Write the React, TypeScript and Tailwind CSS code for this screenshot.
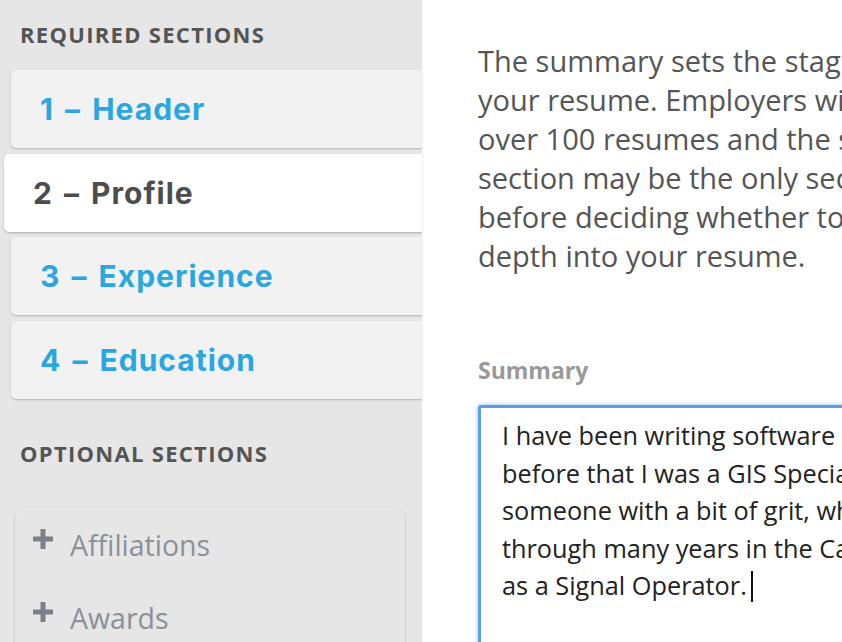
import React from "react";

const open = { fontFamily: '"Open Sans", "DejaVu Sans", sans-serif' };
const geo = { fontFamily: 'Inter, Lato, "Open Sans", sans-serif' };

function Card({ label, active, mt }: { label: string; active?: boolean; mt: string }) {
  return (
    <div
      className={
        "h-[78px] flex items-center rounded-l-[5px] " +
        mt +
        (active
          ? " ml-[4px] pl-[29px] bg-white shadow-[0_1px_2px_rgba(0,0,0,0.25)]"
          : " ml-[11px] pl-[29px] bg-[#f2f2f2] shadow-[0_1px_2px_rgba(0,0,0,0.22)]")
      }
    >
      <span
        className={
          "text-[30px] font-bold leading-none tracking-[1px] [word-spacing:3px] " +
          (active ? "text-[#4d4d4d]" : "text-[#2aa7e0]")
        }
        style={geo}
      >
        {label}
      </span>
    </div>
  );
}

function Plus() {
  return (
    <svg width="20" height="20" viewBox="0 0 20 20" className="shrink-0">
      <rect x="7.5" y="0" width="5" height="20" fill="#7c8088" />
      <rect x="0" y="7.5" width="20" height="5" fill="#7c8088" />
    </svg>
  );
}

export default function App() {
  const para = [
    "The summary sets the stage for",
    "your resume. Employers will read",
    "over 100 resumes and the summary",
    "section may be the only section read",
    "before deciding whether to go in",
    "depth into your resume.",
  ];
  const summary = [
    "I have been writing software since",
    "before that I was a GIS Specialist",
    "someone with a bit of grit, who",
    "through many years in the Canadian",
    "as a Signal Operator.",
  ];
  return (
    <div className="w-[842px] h-[642px] overflow-hidden flex bg-white" style={open}>
      <div className="w-[422px] shrink-0 bg-[#e6e6e6] h-full">
        <div className="pt-[19px] pl-[20px] text-[22px] leading-[30px] font-bold text-[#555] tracking-[1.3px]">
          REQUIRED SECTIONS
        </div>
        <Card label="1 – Header" mt="mt-[21px]" />
        <Card label="2 – Profile" active mt="mt-[6px]" />
        <Card label="3 – Experience" mt="mt-[5px]" />
        <Card label="4 – Education" mt="mt-[6px]" />
        <div className="mt-[39px] pl-[20px] text-[22px] leading-[30px] font-bold text-[#555] tracking-[1.3px]">
          OPTIONAL SECTIONS
        </div>
        <div className="mt-[40px] ml-[15px] w-[390px] h-[200px] rounded-[10px] bg-[#e6e6e6] shadow-[0_1px_3px_rgba(0,0,0,0.18)] pl-[18px] pt-[17px]">
          <div className="flex items-start gap-[17px] h-[40px]">
            <div className="mt-[4px]">
              <Plus />
            </div>
            <span className="text-[28.5px] leading-[40px] text-[#8c9099]">Affiliations</span>
          </div>
          <div className="flex items-start gap-[17px] h-[40px] mt-[33px]">
            <div className="mt-[4px]">
              <Plus />
            </div>
            <span className="text-[28.5px] leading-[40px] text-[#8c9099]">Awards</span>
          </div>
        </div>
      </div>
      <div className="flex-1 min-w-0 overflow-hidden pl-[56px] pt-[41px]">
        <div className="text-[29px] leading-[39px] text-[#555] whitespace-nowrap">
          {para.map((l) => (
            <div key={l}>{l}</div>
          ))}
        </div>
        <div className="mt-[80px] text-[23px] leading-[30px] font-bold text-[#999]">Summary</div>
        <div className="mt-[20px] w-[500px] h-[300px] border-[3px] border-[#5d9fe0] rounded-[3px] shadow-[0_0_4px_#8ab8ec] pl-[21px] pt-[9px] text-[25.3px] leading-[37.5px] text-[#222] whitespace-nowrap">
          {summary.map((l, i) => (
            <div key={l}>
              {l}
              {i === summary.length - 1 && (
                <span className="inline-block w-[2px] h-[31px] bg-[#111] align-middle ml-[4px] -mt-[4px]" />
              )}
            </div>
          ))}
        </div>
      </div>
    </div>
  );
}
